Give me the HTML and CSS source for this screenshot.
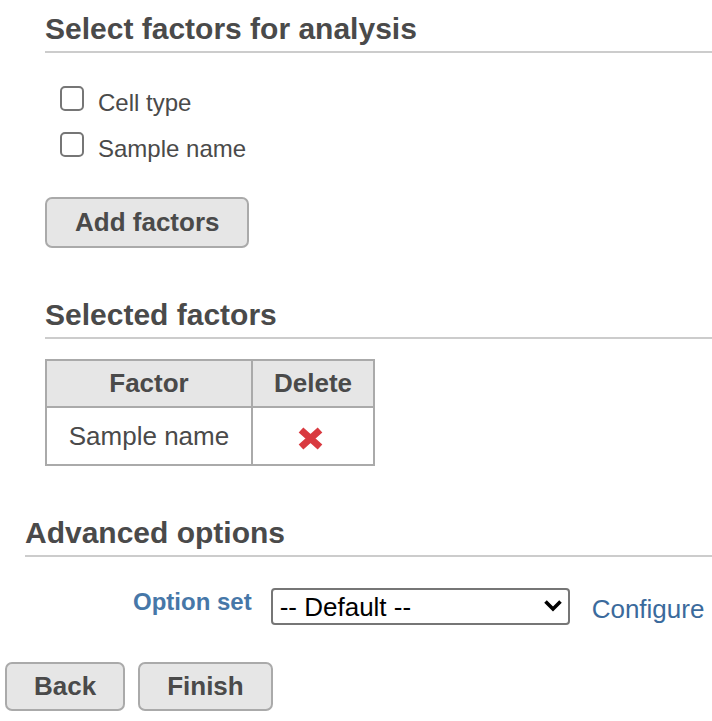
FILE: index.html
```html
<!DOCTYPE html>
<html lang="en">
<head>
<meta charset="utf-8">
<title>Factors</title>
<link rel="stylesheet" href="styles.css">
</head>
<body>
<div class="page">
  <section class="block">
    <h2 class="section-title">Select factors for analysis</h2>
    <div class="checklist">
      <label class="check-row"><input type="checkbox" class="check"><span>Cell type</span></label>
      <label class="check-row"><input type="checkbox" class="check"><span>Sample name</span></label>
    </div>
    <button class="btn add-btn" type="button">Add factors</button>
  </section>

  <section class="block">
    <h2 class="section-title">Selected factors</h2>
    <table class="factors">
      <thead>
        <tr><th class="col-factor">Factor</th><th class="col-delete">Delete</th></tr>
      </thead>
      <tbody>
        <tr>
          <td>Sample name</td>
          <td>
            <svg class="del-icon" width="25" height="23" viewBox="0 0 25 23" aria-label="Delete">
              <path d="M3 3 L22 20 M22 3 L3 20" stroke="#d93a40" stroke-width="7" fill="none"/>
            </svg>
          </td>
        </tr>
      </tbody>
    </table>
  </section>

  <section class="block advanced">
    <h2 class="section-title">Advanced options</h2>
    <div class="option-row">
      <span class="option-label">Option set</span>
      <div class="select-wrap">
        <select class="select">
          <option>-- Default --</option>
        </select>
        <svg class="chevron" width="20" height="13" viewBox="0 0 20 13">
          <path d="M2.5 2.5 L10 10 L17.5 2.5" stroke="#000" stroke-width="3.6" fill="none"/>
        </svg>
      </div>
      <a class="configure" href="#">Configure</a>
    </div>
  </section>

  <div class="actions">
    <button class="btn nav-btn" type="button">Back</button>
    <button class="btn nav-btn" type="button">Finish</button>
  </div>
</div>
</body>
</html>
```

FILE: styles.css
```css
html, body {
  margin: 0;
  padding: 0;
  background: #ffffff;
}

body {
  font-family: "Liberation Sans", Arial, sans-serif;
  color: #4a4a4a;
}

.page {
  padding-top: 10px;
}

.block {
  margin-left: 45px;
}

.section-title {
  margin: 0;
  font-size: 30px;
  font-weight: bold;
  line-height: 34px;
  padding-top: 2px;
  padding-bottom: 5px;
  border-bottom: 2px solid #cccccc;
  color: #4a4a4a;
}

.checklist {
  margin-top: 27px;
  padding-left: 15px;
  display: flex;
  flex-direction: column;
}

.check-row {
  display: flex;
  align-items: flex-start;
  height: 46px;
  line-height: 46px;
  font-size: 24px;
}

.check {
  appearance: none;
  -webkit-appearance: none;
  box-sizing: border-box;
  width: 24px;
  height: 25px;
  margin: 6px 14px 0 0;
  border: 2px solid #767676;
  border-radius: 5px;
  background: #fff;
}

.btn {
  font-family: "Liberation Sans", Arial, sans-serif;
  font-weight: bold;
  font-size: 26px;
  color: #4a4a4a;
  background: #e6e6e6;
  border: 2px solid #aaaaaa;
  border-radius: 7px;
  box-sizing: border-box;
  cursor: pointer;
}

.add-btn {
  display: block;
  margin-top: 25px;
  height: 51px;
  padding: 0 28px;
}

.block + .block {
  margin-top: 48px;
}

.factors {
  margin-top: 20px;
  border-collapse: separate;
  border-spacing: 0;
  border-left: 2px solid #aaaaaa;
  border-top: 2px solid #aaaaaa;
  font-size: 26px;
}

.factors th,
.factors td {
  border-right: 2px solid #aaaaaa;
  border-bottom: 2px solid #aaaaaa;
  text-align: center;
  padding: 0;
}

.factors th {
  background: #e6e6e6;
  font-weight: bold;
  height: 45px;
}

.factors td {
  height: 56px;
  font-weight: normal;
}

.col-factor {
  width: 204px;
}

.col-delete {
  width: 120px;
}

.del-icon {
  display: inline-block;
  vertical-align: middle;
  margin-left: -6px;
  margin-top: 2px;
}

.advanced {
  margin-left: 25px;
}

.option-row {
  display: flex;
  align-items: flex-start;
  margin-top: 31px;
  padding-left: 108px;
}

.option-label {
  font-size: 24px;
  font-weight: bold;
  line-height: 28px;
  color: #4677a8;
  margin-right: 19px;
}

.select-wrap {
  position: relative;
  width: 299px;
  height: 37px;
}

.select {
  appearance: none;
  -webkit-appearance: none;
  box-sizing: border-box;
  width: 299px;
  height: 37px;
  border: 2px solid #767676;
  border-radius: 4px;
  background: #fff;
  font-family: "Liberation Sans", Arial, sans-serif;
  font-size: 26px;
  color: #000;
  padding: 0 0 0 7px;
  margin: 0;
}

.chevron {
  position: absolute;
  right: 7px;
  top: 11px;
  pointer-events: none;
}

.configure {
  margin-left: 22px;
  margin-top: 3px;
  font-size: 26px;
  line-height: 36px;
  color: #3b6a9c;
  text-decoration: none;
}

.actions {
  display: flex;
  gap: 13px;
  margin-top: 35px;
  padding-left: 5px;
}

.nav-btn {
  height: 49px;
  padding: 0 27px;
}
```
